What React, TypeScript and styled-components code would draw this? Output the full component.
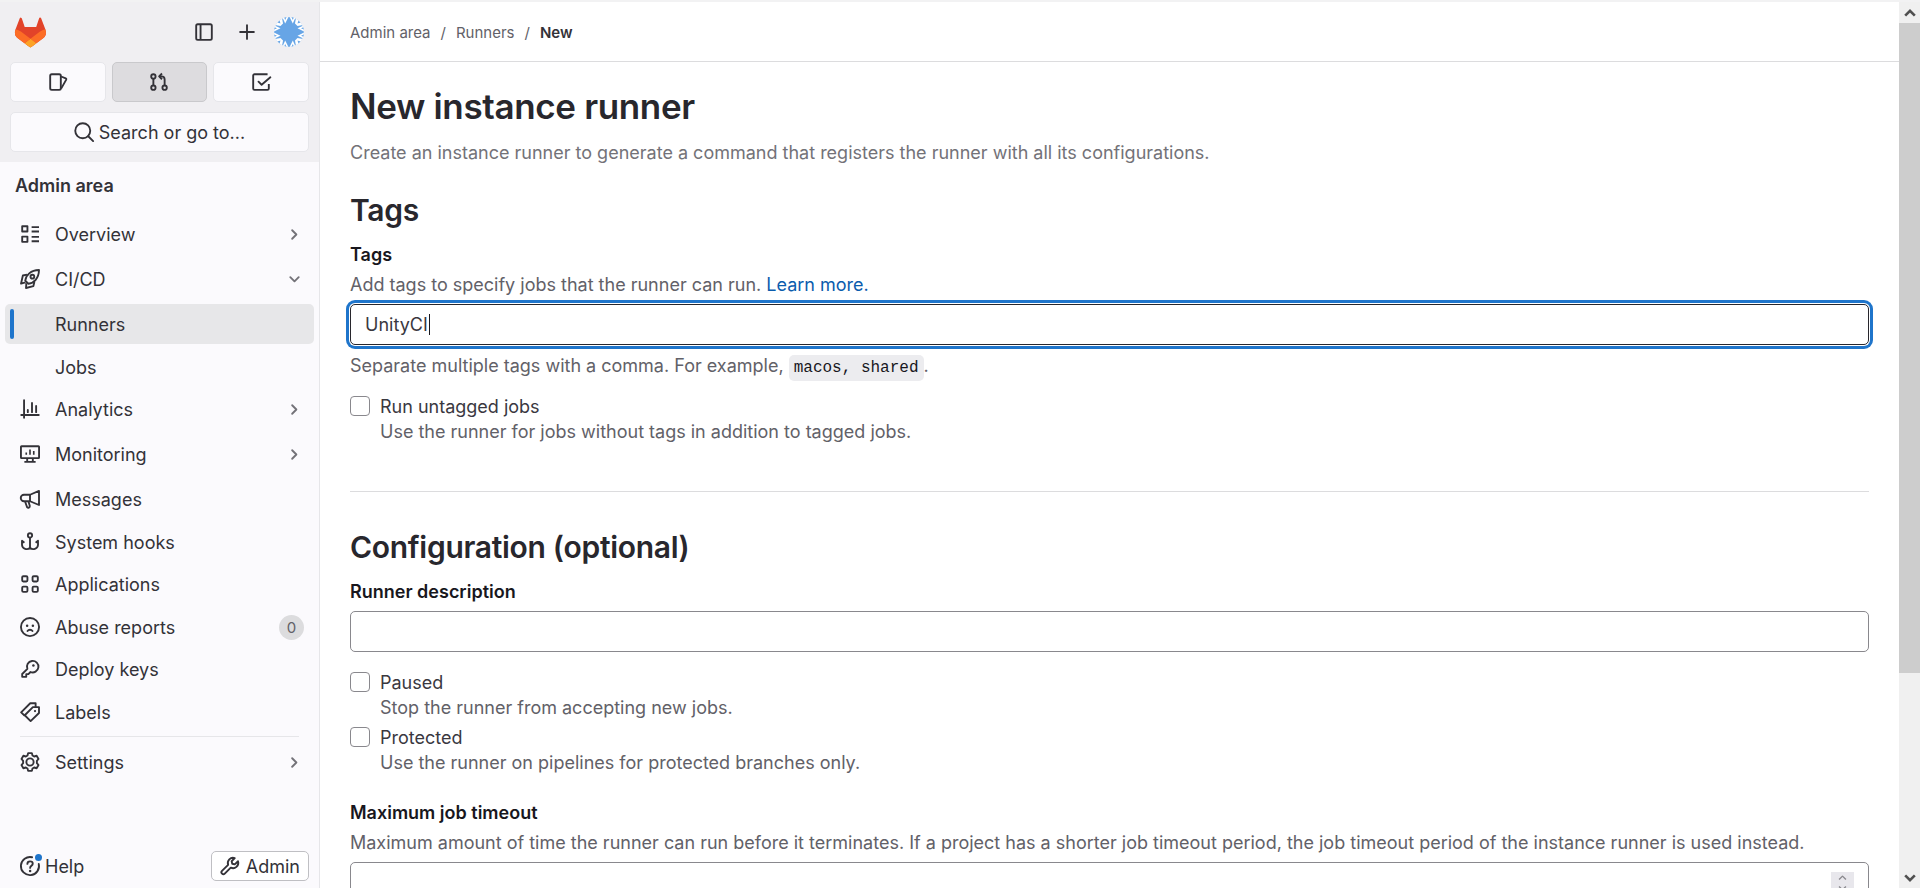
import React from "react";
import styled, { createGlobalStyle } from "styled-components";

const GlobalStyle = createGlobalStyle`
  *, *::before, *::after { box-sizing: border-box; }
  body {
    margin: 0;
    background: #fff;
    color: #3a383f;
    font-family: Inter, "Noto Sans", sans-serif;
    font-size: 18px;
    line-height: 25px;
  }
  a { color: inherit; text-decoration: none; }
  button { font: inherit; color: inherit; cursor: pointer; }
`;

const Page = styled.div`
  display: grid;
  grid-template-columns: 320px minmax(0, 1fr) 21px;
  height: 100vh;
  overflow: hidden;
  border-top: 2px solid #f2f2f3;
`;

const Svg = styled.svg<{ $size: number }>`
  width: ${(p) => p.$size}px;
  height: ${(p) => p.$size}px;
  flex: none;
  display: block;
  overflow: visible;
`;

type IconProps = { children: React.ReactNode; size?: number };

function Icon({ children, size = 20 }: IconProps) {
  return (
    <Svg
      $size={size}
      viewBox="0 0 16 16"
      fill="none"
      stroke="currentColor"
      strokeWidth="1.5"
      strokeLinejoin="round"
      aria-hidden="true"
    >
      {children}
    </Svg>
  );
}

const icons = {
  sidebar: (
    <>
      <rect x="1.75" y="1.75" width="12.5" height="12.5" rx="1.25" />
      <path d="M5.25 2v12" />
    </>
  ),
  plus: <path d="M8 2.5v11M2.5 8h11" strokeLinecap="round" />,
  issues: (
    <>
      <rect x="1.75" y="1.75" width="8.5" height="12.5" rx="1.25" />
      <path d="m10.5 3.6 3.7 1.5a.8.8 0 0 1 .4 1l-4.1 7.2" />
    </>
  ),
  merge: (
    <>
      <circle cx="3.5" cy="3.5" r="1.75" />
      <circle cx="3.5" cy="12.5" r="1.75" />
      <circle cx="12.5" cy="12.5" r="1.75" />
      <path d="M3.5 5.3v5.4M12.5 10.7V6A2.5 2.5 0 0 0 10 3.5H8.5" />
      <path d="M10.4 1.2 8.1 3.5l2.3 2.3" />
    </>
  ),
  todo: (
    <>
      <path d="M14.25 9.5v3.75a1 1 0 0 1-1 1H2.75a1 1 0 0 1-1-1V2.75a1 1 0 0 1 1-1h10.5" />
      <path d="M6 7.7l2.5 2.5 7-6" strokeLinecap="round" />
    </>
  ),
  search: (
    <>
      <circle cx="7" cy="7" r="6" />
      <path d="m11.4 11.4 3.9 3.9" strokeLinecap="round" />
    </>
  ),
  overview: (
    <>
      <rect x="1.75" y="1.75" width="4.2" height="4.2" />
      <rect x="1.75" y="10.05" width="4.2" height="4.2" />
      <path d="M9.3 2.5h5.9M9.3 6h5.9M9.3 10.3h5.9M9.3 13.8h5.9" />
    </>
  ),
  rocket: (
    <>
      <path d="M4.2 9.3C4.7 5 8.5.9 15.2.8c-.1 6.7-4.2 10.5-8.5 11z" />
      <circle cx="9.9" cy="6.1" r="1.5" />
      <path d="M5.6 4.5 2.3 5.2.8 11.7l3.6-1M11.5 10.4l-.8 3.3-5.9 1.5.3-3.9" />
    </>
  ),
  chart: (
    <path
      d="M3.25 1v14M1 12.75h14M6.25 8.7v1.8M9.6 3.2v7.3M12.9 5.5v5"
      strokeLinecap="round"
    />
  ),
  monitor: (
    <>
      <rect x=".75" y="1.75" width="14.5" height="9.5" rx=".5" />
      <path d="M5.75 11.5v2.5M10.25 11.5v2.5M3.5 14.25h9" />
      <path d="M5 6.8v1.7M8 4.3v4.2M11 5.6v2.9" strokeWidth="1.3" />
    </>
  ),
  bullhorn: (
    <>
      <path d="M15.2 1.5v11.3L8 9.8H3.2a2.6 2.6 0 0 1 0-5.2H8z" />
      <path d="M8 4.8v5M4 9.8l1.6 4.6c.9 1 2.6.5 2.2-1l-1-3.4" />
    </>
  ),
  hook: (
    <>
      <circle cx="8" cy="2.7" r="1.7" />
      <path d="M8 4.4v9.6" />
      <path d="M3.5 8.6 1.6 7v3.4A3.7 3.7 0 0 0 8 12.5a3.7 3.7 0 0 0 6.4-2.1V7l-1.9 1.6" />
    </>
  ),
  apps: (
    <>
      <rect x="1.75" y="1.75" width="4.2" height="4.2" rx=".9" />
      <rect x="10.05" y="1.75" width="4.2" height="4.2" rx=".9" />
      <rect x="1.75" y="10.05" width="4.2" height="4.2" rx=".9" />
      <rect x="10.05" y="10.05" width="4.2" height="4.2" rx=".9" />
    </>
  ),
  sad: (
    <>
      <circle cx="8" cy="8" r="7.25" />
      <path d="M6 11.2c.9-1.3 3.1-1.3 4 0" strokeLinecap="round" />
      <circle cx="5.7" cy="7" r="1" fill="currentColor" stroke="none" />
      <circle cx="10.3" cy="7" r="1" fill="currentColor" stroke="none" />
    </>
  ),
  key: (
    <>
      <path d="M5.9 7.9a4.6 4.6 0 1 1 2.5 2.5L6.7 12.1H5v2.15H1.75V12z" />
      <circle cx="10.7" cy="5.2" r="1" fill="currentColor" stroke="none" />
    </>
  ),
  labels: (
    <>
      <path d="M15.2 4.1v4.7l-6.7 6.5-4.7-4.7 6.5-6.5z" />
      <path d="M12.5 3.9V1H8.2L.9 8.3l2.9 2.7" />
      <circle cx="12" cy="7.2" r=".9" fill="currentColor" stroke="none" />
    </>
  ),
  gear: (
    <>
      <path d="M6.5.9h3l.5 1.9 1.3.8 2-.6 1.5 2.6-1.3 1.5v1.8l1.3 1.5-1.5 2.6-2-.6-1.3.8-.5 1.9h-3L6 13.200l-1.300-.8-2 .6-1.500-2.600 1.300-1.500V7.100L1.200 5.600 2.700 3l2 .6L6 2.800z" />
      <circle cx="8" cy="8" r="2.9" />
    </>
  ),
  help: (
    <>
      <path d="M15 6.3A7.25 7.25 0 1 1 9.7 1" strokeLinecap="round" />
      <path d="M5.9 6.3c0-2.7 4.3-2.6 4.3-.1 0 1.6-2.1 1.7-2.1 3.3" strokeLinecap="round" />
      <circle cx="8.1" cy="11.9" r="1" fill="currentColor" stroke="none" />
    </>
  ),
  wrench: (
    <path d="M11.8 1.7 9.3 4.2l.5 2 2 .5 2.6-2.5a4.2 4.2 0 0 1-5.8 5.1l-4.8 4.8a1.5 1.5 0 0 1-2.2-2.2l4.9-4.8a4.2 4.2 0 0 1 5.3-5.4z" />
  ),
  right: <path d="m5.5 3.5 4.5 4.5-4.5 4.5" strokeWidth="2" strokeLinecap="round" />,
  down: <path d="M3.5 5.5 8 10l4.500-4.500" strokeWidth="2" strokeLinecap="round" />,
};

type IconName = keyof typeof icons;

const Sidebar = styled.aside`
  display: flex;
  flex-direction: column;
  min-height: 0;
  background: #fbfafd;
  border-right: 1px solid #e6e6e9;
  color: #333238;
`;

const SidebarTop = styled.div`
  display: flex;
  flex-direction: column;
  gap: 10px;
  height: 160px;
  padding: 10px 10px 9px;
  background: #f0eff2;
`;

const BrandRow = styled.div`
  display: flex;
  align-items: center;
  height: 40px;
  padding: 0 5px;
`;

const BrandLink = styled.a`
  margin-right: auto;
`;

const BrandActions = styled.div`
  display: flex;
  gap: 23px;
  margin-right: 17px;
`;

const PlainButton = styled.button`
  display: flex;
  padding: 0;
  border: 0;
  background: none;
`;

const SwitchRow = styled.nav`
  display: grid;
  grid-template-columns: 1fr 1fr 1fr;
  gap: 6px;
`;

const SwitchButton = styled.button<{ $active?: boolean }>`
  display: flex;
  align-items: center;
  justify-content: center;
  height: 40px;
  padding: 0;
  border: 1px solid ${(p) => (p.$active ? "#c9c9cc" : "#e6e6ea")};
  border-radius: 5px;
  background: ${(p) => (p.$active ? "#dddcdf" : "#fbfafd")};
`;

const SearchButton = styled(SwitchButton)`
  gap: 5px;
`;

const ContextTitle = styled.div`
  padding: 11px 15px 0;
  height: 52px;
  font-weight: 600;
`;

const NavList = styled.ul`
  margin: 0;
  padding: 0 5px;
  list-style: none;
`;

const NavItem = styled.li<{ $group?: boolean }>`
  margin-bottom: ${(p) => (p.$group ? 5 : 2)}px;
  &:nth-child(odd) {
    margin-bottom: ${(p) => (p.$group ? 5 : 3)}px;
  }
`;

const NavLink = styled.a<{ $active?: boolean }>`
  display: flex;
  align-items: center;
  gap: 15px;
  height: 40px;
  padding: 0 15px;
  border-radius: 5px;
  background: ${(p) => (p.$active ? "#e7e7e9" : "transparent")};
`;

const NavText = styled.span<{ $indent?: boolean }>`
  flex: 1;
  padding-left: ${(p) => (p.$indent ? 35 : 0)}px;
`;

const ActiveBar = styled.span`
  width: 4px;
  height: 30px;
  border-radius: 2px;
  margin: 0 -9px 0 -10px;
  background: #1f75cb;
`;

const Chevron = styled.span`
  margin-right: -3px;
  color: #737278;
`;

const Count = styled.span`
  width: 25px;
  height: 25px;
  margin-right: -5px;
  border-radius: 50%;
  background: #dcdcde;
  color: #626168;
  font-size: 15px;
  text-align: center;
`;

const Divider = styled.hr`
  width: 279px;
  margin: 2px 0 5px 20px;
  border: 0;
  border-top: 1px solid #e6e6e9;
`;

const SidebarFoot = styled.div`
  display: flex;
  align-items: center;
  justify-content: space-between;
  margin-top: auto;
  padding: 0 10px 7px 20px;
`;

const HelpButton = styled.button`
  position: relative;
  display: flex;
  align-items: center;
  gap: 5px;
  padding: 0;
  border: 0;
  background: none;
`;

const HelpDot = styled.span`
  position: absolute;
  top: 0;
  left: 15px;
  width: 7px;
  height: 7px;
  border-radius: 50%;
  background: #1f75cb;
`;

const AdminLink = styled.a`
  display: flex;
  align-items: center;
  gap: 6px;
  height: 30px;
  padding: 0 8px;
  border: 1px solid #bfbfc3;
  border-radius: 5px;
  background: #fff;
`;

const Main = styled.main`
  min-width: 0;
  overflow: hidden;
  background: #fff;
`;

const Crumbs = styled.nav`
  display: flex;
  align-items: center;
  gap: 10px;
  height: 60px;
  padding: 2px 30px 0;
  border-bottom: 1px solid #dcdcde;
  color: #626168;
  font-size: 15px;
  b { color: #333238; font-weight: 600; }
`;

const Content = styled.div`
  padding: 24px 30px 0;
`;

const Title = styled.h1`
  margin: 0;
  color: #28272d;
  font-size: 35px;
  line-height: 40px;
  font-weight: 600;
  letter-spacing: -0.01em;
`;

const Lead = styled.p`
  margin: 14px 0 0;
  color: #737278;
`;

const SectionTitle = styled.h2<{ $first?: boolean }>`
  margin: ${(p) => (p.$first ? 25 : 35)}px 0 0;
  color: #28272d;
  font-size: 30px;
  line-height: 40px;
  font-weight: 600;
  letter-spacing: -0.01em;
`;

const Field = styled.div<{ $top: number }>`
  margin-top: ${(p) => p.$top}px;
`;

const FieldLabel = styled.label`
  display: block;
  color: #18171d;
  font-weight: 600;
`;

const Hint = styled.p<{ $top?: number }>`
  margin: ${(p) => p.$top || 0}px 0 0;
  color: #626168;
`;

const BlueLink = styled.a`
  color: #0b5cad;
`;

const InputWrap = styled.div`
  position: relative;
  margin-top: 7px;
`;

const TextInput = styled.input<{ $focused?: boolean }>`
  display: block;
  width: 100%;
  height: 41px;
  padding: 0 14px;
  border: 1px solid ${(p) => (p.$focused ? "#28272d" : "#89888d")};
  border-radius: 5px;
  outline: none;
  background: #fff;
  color: #3a383f;
  font: inherit;
  caret-color: transparent;
  box-shadow: ${(p) =>
    p.$focused ? "0 0 0 1px #fff, 0 0 0 4px #1f75cb" : "none"};
  appearance: textfield;
  &::-webkit-inner-spin-button { display: none; }
`;

const Caret = styled.span`
  position: absolute;
  top: 10px;
  left: 79px;
  width: 1px;
  height: 21px;
  background: #18171d;
`;

const Spinner = styled.span`
  position: absolute;
  top: 10px;
  right: 15px;
  display: flex;
  flex-direction: column;
  align-items: center;
  width: 23px;
  height: 21px;
  background: #e8e7ec;
  color: #89888d;
`;

const Code = styled.code`
  padding: 4px 5px;
  border-radius: 5px;
  background: #ececef;
  color: #18171d;
  font-family: "Liberation Mono", monospace;
  font-size: 16px;
`;

const CheckRow = styled.div<{ $top: number }>`
  display: grid;
  grid-template-columns: 20px 1fr;
  column-gap: 10px;
  margin-top: ${(p) => p.$top}px;
`;

const CheckBox = styled.input`
  appearance: none;
  width: 20px;
  height: 20px;
  margin: 2px 0 0;
  border: 1px solid #89888d;
  border-radius: 4px;
  background: #fff;
`;

const CheckHint = styled(Hint)`
  grid-column: 2;
`;

const Rule = styled.hr`
  margin: 47px 0 0;
  border: 0;
  border-top: 1px solid #dcdcde;
`;

const ScrollTrack = styled.div`
  display: flex;
  flex-direction: column;
  background: #f0f0f0;
  color: #505050;
`;

const ScrollArrow = styled.span`
  display: flex;
  align-items: center;
  justify-content: center;
  height: 21px;
  flex: none;
`;

const ScrollArea = styled.div`
  flex: 1;
`;

const ScrollThumb = styled.div`
  height: 77%;
  background: #cdcdcd;
`;

function Tanuki() {
  return (
    <Svg $size={31} viewBox="0 0 25 24" aria-hidden="true">
      <path
        fill="#E24329"
        d="m24.507 9.5-.034-.09L21.082.562a.896.896 0 0 0-1.694.091l-2.29 7.01H7.825L5.535.653a.898.898 0 0 0-1.694-.09L.451 9.411.416 9.5a6.297 6.297 0 0 0 2.09 7.278l.012.01.03.022 5.16 3.867 2.56 1.935 1.554 1.176a1.051 1.051 0 0 0 1.268 0l1.555-1.176 2.56-1.935 5.197-3.89.014-.01A6.297 6.297 0 0 0 24.507 9.5Z"
      />
      <path
        fill="#FC6D26"
        d="m24.507 9.5-.034-.09a11.44 11.44 0 0 0-4.56 2.051l-7.447 5.632 4.742 3.584 5.197-3.89.014-.01A6.297 6.297 0 0 0 24.507 9.5Z"
      />
      <path
        fill="#FCA326"
        d="m7.707 20.677 2.56 1.935 1.555 1.176a1.051 1.051 0 0 0 1.268 0l1.555-1.176 2.56-1.935-4.743-3.584-4.755 3.584Z"
      />
      <path
        fill="#FC6D26"
        d="M5.01 11.461a11.43 11.43 0 0 0-4.56-2.05L.416 9.5a6.297 6.297 0 0 0 2.09 7.278l.012.01.03.022 5.16 3.867 4.745-3.584-7.444-5.632Z"
      />
    </Svg>
  );
}

function Avatar() {
  const sides = [0, 90, 180, 270];
  return (
    <Svg $size={30} viewBox="-15 -15 30 30" role="img" aria-label="User avatar">
      <clipPath id="avatar-disc">
        <circle r="15" />
      </clipPath>
      <g clipPath="url(#avatar-disc)">
        <circle r="15" fill="#67a5e6" />
        {sides.map((angle) => (
          <g key={angle} transform={`rotate(${angle})`}>
            <path fill="#fff" d="M-7-15.500H-.3L-3.800-8.500zM.3-15.500H7L3.800-8.500z" />
            <path fill="#67a5e6" d="M-5-15h2.500L-3.800-12zM2.500-15H5L3.800-12z" />
            <path fill="#fff" d="M-14-7-7-14-6-8.500-8.500-6z" />
            <path fill="#67a5e6" d="M-11.500-9.500-9.500-11.500-8.500-8.500z" />
          </g>
        ))}
      </g>
    </Svg>
  );
}

type NavEntry = {
  label: string;
  icon?: IconName;
  chevron?: "right" | "down";
  active?: boolean;
  count?: number;
};

const navEntries: NavEntry[] = [
  { label: "Overview", icon: "overview", chevron: "right" },
  { label: "CI/CD", icon: "rocket", chevron: "down" },
  { label: "Runners", active: true },
  { label: "Jobs" },
  { label: "Analytics", icon: "chart", chevron: "right" },
  { label: "Monitoring", icon: "monitor", chevron: "right" },
  { label: "Messages", icon: "bullhorn" },
  { label: "System hooks", icon: "hook" },
  { label: "Applications", icon: "apps" },
  { label: "Abuse reports", icon: "sad", count: 0 },
  { label: "Deploy keys", icon: "key" },
  { label: "Labels", icon: "labels" },
];

function NavRow({ entry }: { entry: NavEntry }) {
  return (
    <NavItem $group={Boolean(entry.chevron)}>
      <NavLink href="#" $active={entry.active}>
        {entry.active && <ActiveBar />}
        {entry.icon && <Icon>{icons[entry.icon]}</Icon>}
        <NavText $indent={!entry.icon}>{entry.label}</NavText>
        {entry.chevron && (
          <Chevron>
            <Icon size={15}>{icons[entry.chevron]}</Icon>
          </Chevron>
        )}
        {entry.count !== undefined && <Count>{entry.count}</Count>}
      </NavLink>
    </NavItem>
  );
}

type CheckProps = { id: string; label: string; hint: string; top: number };

function Check({ id, label, hint, top }: CheckProps) {
  return (
    <CheckRow $top={top}>
      <CheckBox type="checkbox" id={id} />
      <label htmlFor={id}>{label}</label>
      <CheckHint>{hint}</CheckHint>
    </CheckRow>
  );
}

export default function App() {
  return (
    <>
      <GlobalStyle />
      <Page>
        <Sidebar>
          <SidebarTop>
            <BrandRow>
              <BrandLink href="#" aria-label="Homepage">
                <Tanuki />
              </BrandLink>
              <BrandActions>
                <PlainButton aria-label="Hide sidebar">
                  <Icon>{icons.sidebar}</Icon>
                </PlainButton>
                <PlainButton aria-label="Create new">
                  <Icon>{icons.plus}</Icon>
                </PlainButton>
              </BrandActions>
              <Avatar />
            </BrandRow>
            <SwitchRow>
              <SwitchButton aria-label="Issues">
                <Icon>{icons.issues}</Icon>
              </SwitchButton>
              <SwitchButton $active aria-label="Merge requests">
                <Icon>{icons.merge}</Icon>
              </SwitchButton>
              <SwitchButton aria-label="To-Do List">
                <Icon>{icons.todo}</Icon>
              </SwitchButton>
            </SwitchRow>
            <SearchButton>
              <Icon>{icons.search}</Icon>
              Search or go to...
            </SearchButton>
          </SidebarTop>
          <ContextTitle>Admin area</ContextTitle>
          <NavList>
            {navEntries.map((entry) => (
              <NavRow key={entry.label} entry={entry} />
            ))}
          </NavList>
          <Divider />
          <NavList>
            <NavRow entry={{ label: "Settings", icon: "gear", chevron: "right" }} />
          </NavList>
          <SidebarFoot>
            <HelpButton>
              <Icon>{icons.help}</Icon>
              <HelpDot />
              Help
            </HelpButton>
            <AdminLink href="#">
              <Icon>{icons.wrench}</Icon>
              Admin
            </AdminLink>
          </SidebarFoot>
        </Sidebar>

        <Main>
          <Crumbs aria-label="Breadcrumb">
            <a href="#">Admin area</a>
            <span>/</span>
            <a href="#">Runners</a>
            <span>/</span>
            <b>New</b>
          </Crumbs>
          <Content>
            <Title>New instance runner</Title>
            <Lead>
              Create an instance runner to generate a command that registers the
              runner with all its configurations.
            </Lead>

            <SectionTitle $first>Tags</SectionTitle>
            <Field $top={12}>
              <FieldLabel htmlFor="tags">Tags</FieldLabel>
              <Hint $top={5}>
                Add tags to specify jobs that the runner can run.{" "}
                <BlueLink href="#">Learn more.</BlueLink>
              </Hint>
              <InputWrap>
                <TextInput id="tags" type="text" defaultValue="UnityCI" $focused />
                <Caret />
              </InputWrap>
              <Hint $top={8}>
                Separate multiple tags with a comma. For example,{" "}
                <Code>macos, shared</Code>.
              </Hint>
            </Field>
            <Check
              id="untagged"
              label="Run untagged jobs"
              hint="Use the runner for jobs without tags in addition to tagged jobs."
              top={13}
            />

            <Rule />

            <SectionTitle>Configuration (optional)</SectionTitle>
            <Field $top={12}>
              <FieldLabel htmlFor="description">Runner description</FieldLabel>
              <InputWrap>
                <TextInput id="description" type="text" />
              </InputWrap>
            </Field>
            <Check
              id="paused"
              label="Paused"
              hint="Stop the runner from accepting new jobs."
              top={18}
            />
            <Check
              id="protected"
              label="Protected"
              hint="Use the runner on pipelines for protected branches only."
              top={5}
            />
            <Field $top={25}>
              <FieldLabel htmlFor="timeout">Maximum job timeout</FieldLabel>
              <Hint $top={5}>
                Maximum amount of time the runner can run before it terminates. If a
                project has a shorter job timeout period, the job timeout period of
                the instance runner is used instead.
              </Hint>
              <InputWrap>
                <TextInput id="timeout" type="number" />
                <Spinner>
                  <Icon size={11}>
                    <path d="M3 11l5-5 5 5" strokeWidth="2" />
                  </Icon>
                  <Icon size={11}>
                    <path d="M3 5l5 5 5-5" strokeWidth="2" />
                  </Icon>
                </Spinner>
              </InputWrap>
            </Field>
          </Content>
        </Main>

        <ScrollTrack aria-hidden="true">
          <ScrollArrow>
            <Icon size={14}>
              <path d="M2.5 11 8 5.500l5.500 5.500" strokeWidth="3" strokeLinejoin="miter" />
            </Icon>
          </ScrollArrow>
          <ScrollArea>
            <ScrollThumb />
          </ScrollArea>
          <ScrollArrow>
            <Icon size={14}>
              <path d="M2.5 5 8 10.500 13.500 5" strokeWidth="3" strokeLinejoin="miter" />
            </Icon>
          </ScrollArrow>
        </ScrollTrack>
      </Page>
    </>
  );
}
